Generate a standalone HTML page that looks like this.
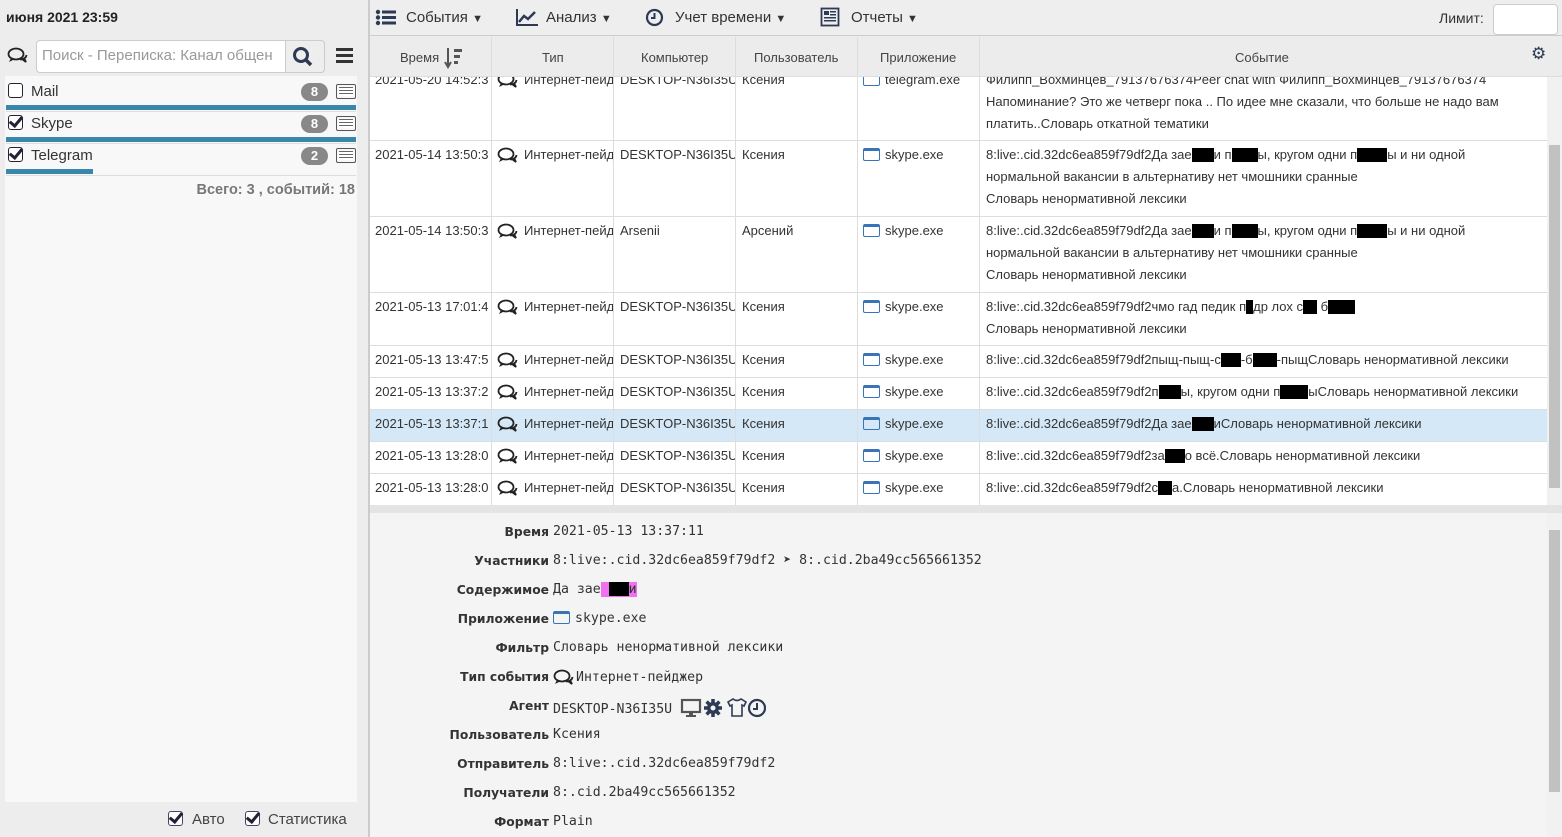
<!DOCTYPE html>
<html><head><meta charset="utf-8"><style>
*{box-sizing:border-box;margin:0;padding:0}
body{width:1562px;height:837px;overflow:hidden;background:#ededed;font-family:"Liberation Sans",sans-serif;color:#333;position:relative}
.abs{position:absolute}
.badge{position:absolute;left:301px;width:27px;height:18px;border-radius:9px;background:#888;color:#fff;font-weight:bold;font-size:13px;text-align:center;line-height:18px}
.lst{position:absolute;left:336px;width:20px;height:15px;border:1px solid #555;border-radius:2px;background:repeating-linear-gradient(#fff 0 2px,#666 2px 3px);background-clip:content-box;padding:2px}
.cb{position:absolute;width:15px;height:15px;border:1.5px solid #223;border-radius:3px;background:#fff}
.chk::after{content:"";position:absolute;left:3px;top:-2px;width:5px;height:10px;border:solid #223;border-width:0 3px 3px 0;transform:rotate(40deg)}
.row{position:absolute;left:370px;width:1177px;border-bottom:1px solid #ddd;background:#fff;font-size:13px;line-height:22px}
.row div{position:absolute;top:3px;white-space:nowrap;overflow:hidden}
.c1{left:5px;width:116px}.c2{left:127px;width:116px}.c3{left:250px;width:115px}.c4{left:372px;width:115px}.c5{left:493px;width:115px}.c6{left:616px;width:560px;white-space:normal!important}
.vl{position:absolute;top:37px;height:468px;width:1px;background:#ddd}
.ap{display:inline-block;width:17px;height:13px;border:1.5px solid #3a74b8;border-top-width:3px;border-radius:2px;vertical-align:-2px;margin-right:5px}
.bl{display:inline-block;background:#000;height:14px;vertical-align:-3px}
.chat{display:inline-block;width:22px;height:16px;vertical-align:-4px;margin-right:5px}
.dl{position:absolute;right:1013px;font-weight:bold;font-size:12.3px;font-family:"DejaVu Sans",sans-serif;text-align:right;color:#333}
.dv{position:absolute;left:553px;font-family:"DejaVu Sans Mono",monospace;font-size:13.2px}
.hd{position:absolute;top:50px;font-size:13px;color:#444}
.tb{position:absolute;top:9px;font-size:15px;color:#333}
</style></head><body>
<svg width="0" height="0" style="position:absolute"><defs><symbol id="ch" viewBox="0 0 22 16"><ellipse cx="9" cy="7" rx="7.5" ry="5.5" fill="none" stroke="#222" stroke-width="1.8"/><path d="M4 11 L2 15 L8 12" fill="#222"/><path d="M13 12.5 Q19 12 19.5 8 M15 12 L19 15 L17 11" fill="none" stroke="#222" stroke-width="1.8"/></symbol></defs></svg>
<!-- left -->
<div class="abs" style="left:6px;top:9px;font-weight:bold;font-size:14px;color:#222">июня 2021 23:59</div>
<svg class="abs" style="left:7px;top:47px" width="22" height="16"><use href="#ch"/></svg>
<div class="abs" style="left:36px;top:40px;width:289px;height:33px;border:1px solid #ccc;border-radius:4px;background:#fff"></div>
<div class="abs" style="left:42px;top:47px;font-size:15px;color:#999">Поиск - Переписка: Канал общен</div>
<div class="abs" style="left:285px;top:40px;width:40px;height:33px;border:1px solid #ccc;border-radius:0 4px 4px 0;background:#eee"></div>
<svg class="abs" style="left:292px;top:46px" width="22" height="22"><circle cx="9" cy="9" r="6.5" fill="none" stroke="#2d3a55" stroke-width="3"/><line x1="14" y1="14" x2="19" y2="19" stroke="#2d3a55" stroke-width="3.5"/></svg>
<div class="abs" style="left:336px;top:48px;width:17px;height:15px;border-top:3px solid #333;border-bottom:3px solid #333"><div style="margin-top:3px;height:3px;background:#333"></div></div>
<div class="abs" style="left:5px;top:76px;width:352px;height:726px;background:#f8f8f8"></div>
<div class="cb" style="left:8px;top:83px"></div><div class="abs" style="left:31px;top:83px;font-size:15px">Mail</div>
<div class="badge" style="top:83px">8</div><div class="lst" style="top:84px"></div>
<div class="abs" style="left:6px;top:105px;width:350px;height:5px;background:#3a87ad"></div>
<div class="abs" style="left:6px;top:111px;width:350px;height:1px;background:#ddd"></div>
<div class="cb chk" style="left:8px;top:115px"></div><div class="abs" style="left:31px;top:115px;font-size:15px">Skype</div>
<div class="badge" style="top:115px">8</div><div class="lst" style="top:116px"></div>
<div class="abs" style="left:6px;top:137px;width:350px;height:5px;background:#3a87ad"></div>
<div class="abs" style="left:6px;top:143px;width:350px;height:1px;background:#ddd"></div>
<div class="cb chk" style="left:8px;top:147px"></div><div class="abs" style="left:31px;top:147px;font-size:15px">Telegram</div>
<div class="badge" style="top:147px">2</div><div class="lst" style="top:148px"></div>
<div class="abs" style="left:6px;top:169px;width:87px;height:5px;background:#3a87ad"></div>
<div class="abs" style="left:6px;top:175px;width:350px;height:1px;background:#ddd"></div>
<div class="abs" style="left:187px;top:182px;font-size:14.5px;font-weight:bold;color:#777;width:168px;text-align:right">Всего: 3 , событий: 18</div>
<div class="cb chk" style="left:168px;top:811px;border-color:#446"></div><div class="abs" style="left:192px;top:811px;font-size:15px;color:#444">Авто</div>
<div class="cb chk" style="left:245px;top:811px;border-color:#446"></div><div class="abs" style="left:268px;top:811px;font-size:15px;color:#444">Статистика</div>
<div class="abs" style="left:368px;top:0;width:2px;height:837px;background:#ccc"></div>
<!-- toolbar -->
<div class="abs" style="left:370px;top:0;width:1192px;height:36px;background:#eee;border-bottom:1px solid #ccc"></div>
<svg class="abs" style="left:375px;top:9px" width="22" height="17"><g fill="#2d3a55"><circle cx="3" cy="3" r="2.2"/><circle cx="3" cy="8.5" r="2.2"/><circle cx="3" cy="14" r="2.2"/><rect x="7" y="1.5" width="14" height="3"/><rect x="7" y="7" width="14" height="3"/><rect x="7" y="12.5" width="14" height="3"/></g></svg>
<div class="tb" style="left:406px">События <span style="font-size:11px">▼</span></div>
<svg class="abs" style="left:515px;top:8px" width="24" height="19"><path d="M2 1 V17 H23" fill="none" stroke="#2d3a55" stroke-width="2"/><path d="M4 14 L9 8 L13 11 L20 4" fill="none" stroke="#2d3a55" stroke-width="2.5"/></svg>
<div class="tb" style="left:546px">Анализ <span style="font-size:11px">▼</span></div>
<svg class="abs" style="left:645px;top:8px" width="19" height="19"><circle cx="9.5" cy="9.5" r="7.5" fill="none" stroke="#2d3a55" stroke-width="2.2"/><path d="M9.5 5 V10 H6" fill="none" stroke="#2d3a55" stroke-width="2"/></svg>
<div class="tb" style="left:675px">Учет времени <span style="font-size:11px">▼</span></div>
<svg class="abs" style="left:820px;top:7px" width="20" height="20"><rect x="1.5" y="1.5" width="17" height="17" fill="none" stroke="#2d3a55" stroke-width="1.8"/><g fill="#2d3a55"><rect x="4" y="4" width="5" height="4"/><rect x="10" y="4" width="6" height="1.5"/><rect x="10" y="7" width="6" height="1.5"/><rect x="4" y="10" width="12" height="1.5"/><rect x="4" y="13" width="12" height="1.5"/></g></svg>
<div class="tb" style="left:851px">Отчеты <span style="font-size:11px">▼</span></div>
<div class="abs" style="left:1439px;top:10px;font-size:14px;color:#333">Лимит:</div>
<div class="abs" style="left:1493px;top:4px;width:65px;height:31px;background:#fff;border:1px solid #ccc;border-radius:4px"></div>
<!-- header -->
<div class="abs" style="left:370px;top:37px;width:1192px;height:40px;background:#ececec;border-bottom:1px solid #ddd"></div>
<div class="hd" style="left:400px">Время</div>
<svg class="abs" style="left:444px;top:47px" width="20" height="22"><path d="M4 1 V18 M1 15 L4 20 L7 15" fill="none" stroke="#555" stroke-width="2"/><g fill="#555"><rect x="10" y="2" width="8" height="3"/><rect x="10" y="8" width="6" height="3"/><rect x="10" y="14" width="4" height="3"/></g></svg>
<div class="hd" style="left:542px">Тип</div>
<div class="hd" style="left:641px">Компьютер</div>
<div class="hd" style="left:754px">Пользователь</div>
<div class="hd" style="left:880px">Приложение</div>
<div class="hd" style="left:1235px">Событие</div>
<div class="abs" style="left:1531px;top:44px;font-size:17px;color:#2d3a55">⚙</div>
<!-- rows -->
<div class="abs" style="left:370px;top:77px;width:1192px;height:428px;background:#fff;overflow:hidden">
<div class="row" style="left:0;top:-11px;height:75px"><div class="c1">2021-05-20 14:52:3</div><div class="c2"><svg class="chat"><use href="#ch"/></svg>Интернет-пейд</div><div class="c3">DESKTOP-N36I35U</div><div class="c4">Ксения</div><div class="c5"><span class="ap" style="border-top-width:1.5px"></span>telegram.exe</div><div class="c6">Филипп_Вохминцев_79137676374Peer chat with Филипп_Вохминцев_79137676374<br>Напоминание? Это же четверг пока .. По идее мне сказали, что больше не надо вам<br>платить..Словарь откатной тематики</div></div>
<div class="row" style="left:0;top:64px;height:76px"><div class="c1">2021-05-14 13:50:3</div><div class="c2"><svg class="chat"><use href="#ch"/></svg>Интернет-пейд</div><div class="c3">DESKTOP-N36I35U</div><div class="c4">Ксения</div><div class="c5"><span class="ap"></span>skype.exe</div><div class="c6">8:live:.cid.32dc6ea859f79df2Да зае<span class="bl" style="width:22px"></span>и п<span class="bl" style="width:26px"></span>ы, кругом одни п<span class="bl" style="width:30px"></span>ы и ни одной<br>нормальной вакансии в альтернативу нет чмошники сранные<br>Словарь ненормативной лексики</div></div>
<div class="row" style="left:0;top:140px;height:76px"><div class="c1">2021-05-14 13:50:3</div><div class="c2"><svg class="chat"><use href="#ch"/></svg>Интернет-пейд</div><div class="c3">Arsenii</div><div class="c4">Арсений</div><div class="c5"><span class="ap"></span>skype.exe</div><div class="c6">8:live:.cid.32dc6ea859f79df2Да зае<span class="bl" style="width:22px"></span>и п<span class="bl" style="width:26px"></span>ы, кругом одни п<span class="bl" style="width:30px"></span>ы и ни одной<br>нормальной вакансии в альтернативу нет чмошники сранные<br>Словарь ненормативной лексики</div></div>
<div class="row" style="left:0;top:216px;height:53px"><div class="c1">2021-05-13 17:01:4</div><div class="c2"><svg class="chat"><use href="#ch"/></svg>Интернет-пейд</div><div class="c3">DESKTOP-N36I35U</div><div class="c4">Ксения</div><div class="c5"><span class="ap"></span>skype.exe</div><div class="c6">8:live:.cid.32dc6ea859f79df2чмо гад педик п<span class="bl" style="width:7px"></span>др лох с<span class="bl" style="width:14px"></span> б<span class="bl" style="width:27px"></span><br>Словарь ненормативной лексики</div></div>
<div class="row" style="left:0;top:269px;height:32px"><div class="c1">2021-05-13 13:47:5</div><div class="c2"><svg class="chat"><use href="#ch"/></svg>Интернет-пейд</div><div class="c3">DESKTOP-N36I35U</div><div class="c4">Ксения</div><div class="c5"><span class="ap"></span>skype.exe</div><div class="c6">8:live:.cid.32dc6ea859f79df2пыщ-пыщ-с<span class="bl" style="width:20px"></span>-б<span class="bl" style="width:24px"></span>-пыщСловарь ненормативной лексики</div></div>
<div class="row" style="left:0;top:301px;height:32px"><div class="c1">2021-05-13 13:37:2</div><div class="c2"><svg class="chat"><use href="#ch"/></svg>Интернет-пейд</div><div class="c3">DESKTOP-N36I35U</div><div class="c4">Ксения</div><div class="c5"><span class="ap"></span>skype.exe</div><div class="c6">8:live:.cid.32dc6ea859f79df2п<span class="bl" style="width:22px"></span>ы, кругом одни п<span class="bl" style="width:28px"></span>ыСловарь ненормативной лексики</div></div>
<div class="row" style="left:0;top:333px;height:32px;background:#d4e8f7"><div class="c1">2021-05-13 13:37:1</div><div class="c2"><svg class="chat"><use href="#ch"/></svg>Интернет-пейд</div><div class="c3">DESKTOP-N36I35U</div><div class="c4">Ксения</div><div class="c5"><span class="ap"></span>skype.exe</div><div class="c6">8:live:.cid.32dc6ea859f79df2Да зае<span class="bl" style="width:22px"></span>иСловарь ненормативной лексики</div></div>
<div class="row" style="left:0;top:365px;height:32px"><div class="c1">2021-05-13 13:28:0</div><div class="c2"><svg class="chat"><use href="#ch"/></svg>Интернет-пейд</div><div class="c3">DESKTOP-N36I35U</div><div class="c4">Ксения</div><div class="c5"><span class="ap"></span>skype.exe</div><div class="c6">8:live:.cid.32dc6ea859f79df2за<span class="bl" style="width:20px"></span>о всё.Словарь ненормативной лексики</div></div>
<div class="row" style="left:0;top:397px;height:32px"><div class="c1">2021-05-13 13:28:0</div><div class="c2"><svg class="chat"><use href="#ch"/></svg>Интернет-пейд</div><div class="c3">DESKTOP-N36I35U</div><div class="c4">Ксения</div><div class="c5"><span class="ap"></span>skype.exe</div><div class="c6">8:live:.cid.32dc6ea859f79df2с<span class="bl" style="width:14px"></span>а.Словарь ненормативной лексики</div></div>
</div>
<div class="vl" style="left:491px"></div><div class="vl" style="left:613px"></div><div class="vl" style="left:735px"></div><div class="vl" style="left:857px"></div><div class="vl" style="left:979px"></div>
<div class="abs" style="left:1547px;top:77px;width:15px;height:428px;background:#f1f1f1"></div>
<div class="abs" style="left:1549px;top:145px;width:11px;height:343px;background:#c1c1c1"></div>
<!-- splitter + detail -->
<div class="abs" style="left:370px;top:505px;width:1192px;height:8px;background:#e4e4e4"></div>
<div class="abs" style="left:370px;top:513px;width:1177px;height:324px;background:#f4f4f4"></div>
<div class="abs" style="left:1547px;top:513px;width:15px;height:324px;background:#f1f1f1"></div>
<div class="abs" style="left:1549px;top:530px;width:11px;height:262px;background:#c1c1c1"></div>
<div class="dl" style="top:525px">Время</div><div class="dv" style="top:524px">2021-05-13 13:37:11</div>
<div class="dl" style="top:554px">Участники</div><div class="dv" style="top:553px">8:live:.cid.32dc6ea859f79df2 ➤ 8:.cid.2ba49cc565661352</div>
<div class="dl" style="top:583px">Содержимое</div><div class="dv" style="top:582px">Да зае<span style="background:#f070f0">&nbsp;<span class="bl" style="width:20px"></span>и</span></div>
<div class="dl" style="top:612px">Приложение</div><div class="dv" style="top:611px"><span class="ap"></span>skype.exe</div>
<div class="dl" style="top:641px">Фильтр</div><div class="dv" style="top:640px">Словарь ненормативной лексики</div>
<div class="dl" style="top:670px">Тип события</div><div class="dv" style="top:669px"><svg class="chat" style="margin-right:1px"><use href="#ch"/></svg>Интернет-пейджер</div>
<div class="dl" style="top:699px">Агент</div><div class="dv" style="top:698px">DESKTOP-N36I35U
<svg width="86" height="20" style="vertical-align:-5px"><rect x="2" y="2" width="18" height="12" fill="none" stroke="#555" stroke-width="2.2"/><rect x="9" y="14" width="4" height="3" fill="#555"/><rect x="6" y="17" width="10" height="2" fill="#555"/>
<g transform="translate(33,10)" fill="#2d3a55"><circle r="6"/><g stroke="#2d3a55" stroke-width="3.5"><line x1="0" y1="-9" x2="0" y2="9"/><line x1="-9" y1="0" x2="9" y2="0"/><line x1="-6.4" y1="-6.4" x2="6.4" y2="6.4"/><line x1="-6.4" y1="6.4" x2="6.4" y2="-6.4"/></g><circle r="2.5" fill="#f4f4f4"/></g>
<path d="M48 4 L53 1 Q57 4 61 1 L66 4 L64 8 L62 7 V18 H52 V7 L50 8 Z" fill="none" stroke="#2d3a55" stroke-width="1.6"/>
<circle cx="77" cy="10" r="8" fill="none" stroke="#2d3a55" stroke-width="2.2"/><path d="M77 5 V11 H73" fill="none" stroke="#2d3a55" stroke-width="2"/></svg></div>
<div class="dl" style="top:728px">Пользователь</div><div class="dv" style="top:727px">Ксения</div>
<div class="dl" style="top:757px">Отправитель</div><div class="dv" style="top:756px">8:live:.cid.32dc6ea859f79df2</div>
<div class="dl" style="top:786px">Получатели</div><div class="dv" style="top:785px">8:.cid.2ba49cc565661352</div>
<div class="dl" style="top:815px">Формат</div><div class="dv" style="top:814px">Plain</div>
</body></html>
